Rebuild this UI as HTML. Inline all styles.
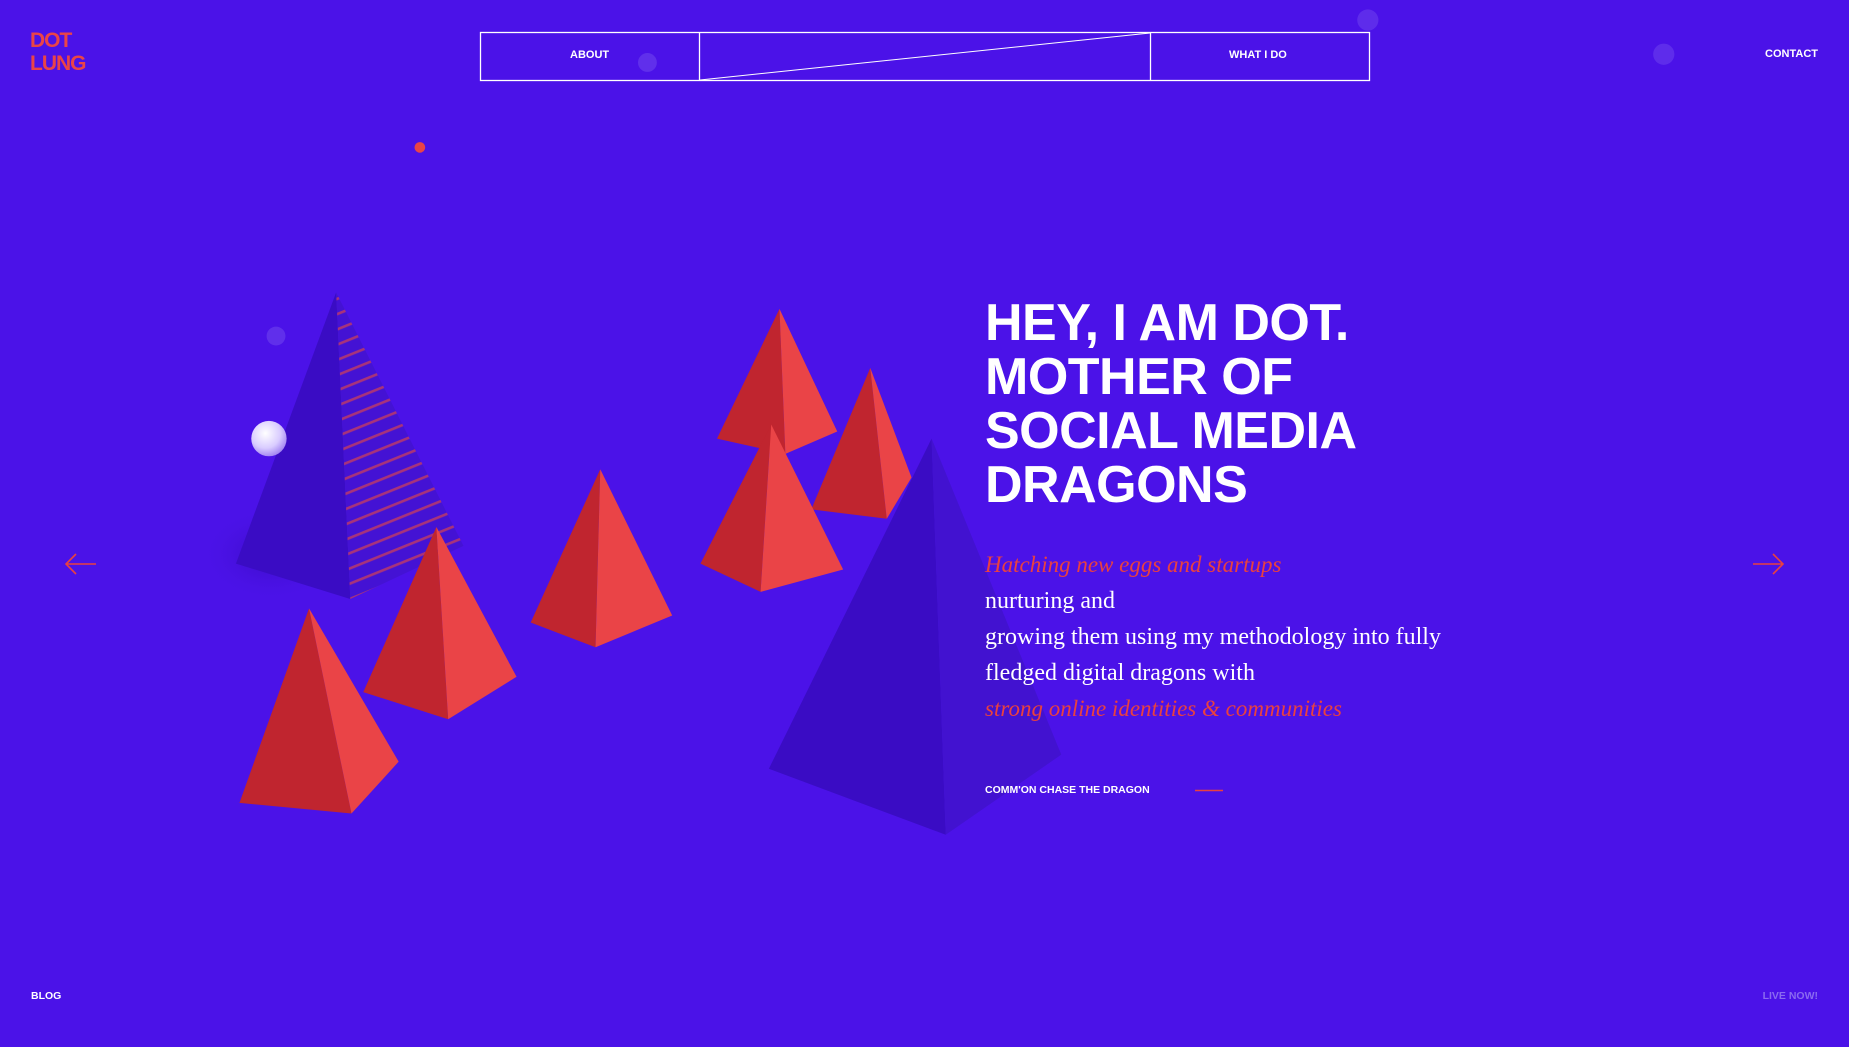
<!DOCTYPE html>
<html><head><meta charset="utf-8"><style>
html,body{margin:0;padding:0}
body{width:1849px;height:1047px;background:#4b12e8;position:relative;overflow:hidden;font-family:"Liberation Sans",sans-serif;color:#fff}
.a{position:absolute;white-space:nowrap}
.nav{font-weight:bold;font-size:11px;letter-spacing:0}
svg{position:absolute;left:0;top:0}
.h1{left:985px;top:296px;font-weight:bold;font-size:52px;line-height:54px;letter-spacing:-0.5px}
.p{left:985px;top:547px;font-family:"Liberation Serif",serif;font-size:24px;line-height:36px;color:#fff}
.p i{color:#e9413f;font-size:23px}
</style></head><body>
<svg width="1849" height="1047" viewBox="0 0 1568 888">
<defs>
<radialGradient id="sp" cx="0.4" cy="0.35" r="0.7"><stop offset="0" stop-color="#fff"/><stop offset="0.6" stop-color="#d9ccff"/><stop offset="1" stop-color="#9c7cf0"/></radialGradient>
<radialGradient id="sh" cx="0.5" cy="0.5" r="0.5"><stop offset="0" stop-color="#2e07a8" stop-opacity="0.6"/><stop offset="1" stop-color="#4b12e8" stop-opacity="0"/></radialGradient>
<pattern id="st" width="12" height="12" patternUnits="userSpaceOnUse" patternTransform="rotate(-22)"><rect width="12" height="12" fill="#4412d4"/><rect y="5" width="12" height="2.2" fill="#a8337a"/></pattern>
</defs>
<ellipse cx="230" cy="470" rx="60" ry="40" fill="url(#sh)"/>
<polygon points="285,248 200,478 297,508" fill="#3a0cc4"/>
<polygon points="285,248 297,508 393,463" fill="url(#st)"/>
<polygon points="661,262 608,372 666,385" fill="#c0252f"/>
<polygon points="661,262 666,385 710,366" fill="#ea4447"/>
<polygon points="738,312 688,432 752,440" fill="#c0252f"/>
<polygon points="738,312 752,440 773,405" fill="#ea4447"/>
<polygon points="654,360 594,478 645,502" fill="#c0252f"/>
<polygon points="654,360 645,502 715,483" fill="#ea4447"/>
<polygon points="790,372 652,652 802,708" fill="#3a0cc4"/>
<polygon points="790,372 802,708 900,640" fill="#4212d0"/>
<polygon points="509,398 450,528 505,549" fill="#c0252f"/>
<polygon points="509,398 505,549 570,522" fill="#ea4447"/>
<polygon points="370,447 308,587 380,610" fill="#c0252f"/>
<polygon points="370,447 380,610 438,574" fill="#ea4447"/>
<polygon points="262,516 203,681 298,690" fill="#c0252f"/>
<polygon points="262,516 298,690 338,646" fill="#ea4447"/>
<circle cx="228" cy="372" r="15" fill="url(#sp)"/>
<circle cx="234" cy="285" r="8" fill="#7a55f0" opacity="0.45"/>
<circle cx="549" cy="53" r="8" fill="#7a55f0" opacity="0.45"/>
<circle cx="1160" cy="17" r="9" fill="#7a55f0" opacity="0.4"/>
<circle cx="1411" cy="46" r="9" fill="#7a55f0" opacity="0.4"/>
<circle cx="356" cy="125" r="4.5" fill="#ea4447"/>
</svg>
<svg width="1849" height="1047">
<rect x="480.5" y="32.5" width="889" height="48" fill="none" stroke="#fff" stroke-width="1.3"/>
<line x1="699.5" y1="32" x2="699.5" y2="80" stroke="#fff" stroke-width="1.3"/>
<line x1="1150.5" y1="32" x2="1150.5" y2="80" stroke="#fff" stroke-width="1.3"/>
<line x1="700" y1="80" x2="1150" y2="33" stroke="#fff" stroke-width="1"/>
<path d="M96 564H66M76 554L66 564L76 574" fill="none" stroke="#e9413f" stroke-width="1.6"/>
<path d="M1753 564H1783M1773 554L1783 564L1773 574" fill="none" stroke="#e9413f" stroke-width="1.6"/>
<line x1="1195" y1="790.5" x2="1223" y2="790.5" stroke="#e9413f" stroke-width="1.5"/>
</svg>
<div class="a" style="left:30px;top:29px;font-weight:bold;font-size:21px;line-height:23px;color:#ea4447;letter-spacing:-1px">DOT<br>LUNG</div>
<div class="a nav" style="left:570px;top:49px">ABOUT</div>
<div class="a nav" style="left:1229px;top:49px">WHAT I DO</div>
<div class="a nav" style="right:31px;top:48px">CONTACT</div>
<div class="a h1">HEY, I AM DOT.<br>MOTHER OF<br>SOCIAL MEDIA<br>DRAGONS</div>
<div class="a p"><i>Hatching new eggs and startups</i><br>nurturing and<br>growing them using my methodology into fully<br>fledged digital dragons with<br><i>strong online identities &amp; communities</i></div>
<div class="a nav" style="left:985px;top:784px;font-size:10.5px">COMM'ON CHASE THE DRAGON</div>
<div class="a nav" style="left:31px;top:990px;font-size:10.5px">BLOG</div>
<div class="a nav" style="right:31px;top:990px;font-size:10.5px;color:#8a6af0">LIVE NOW!</div>
</body></html>
